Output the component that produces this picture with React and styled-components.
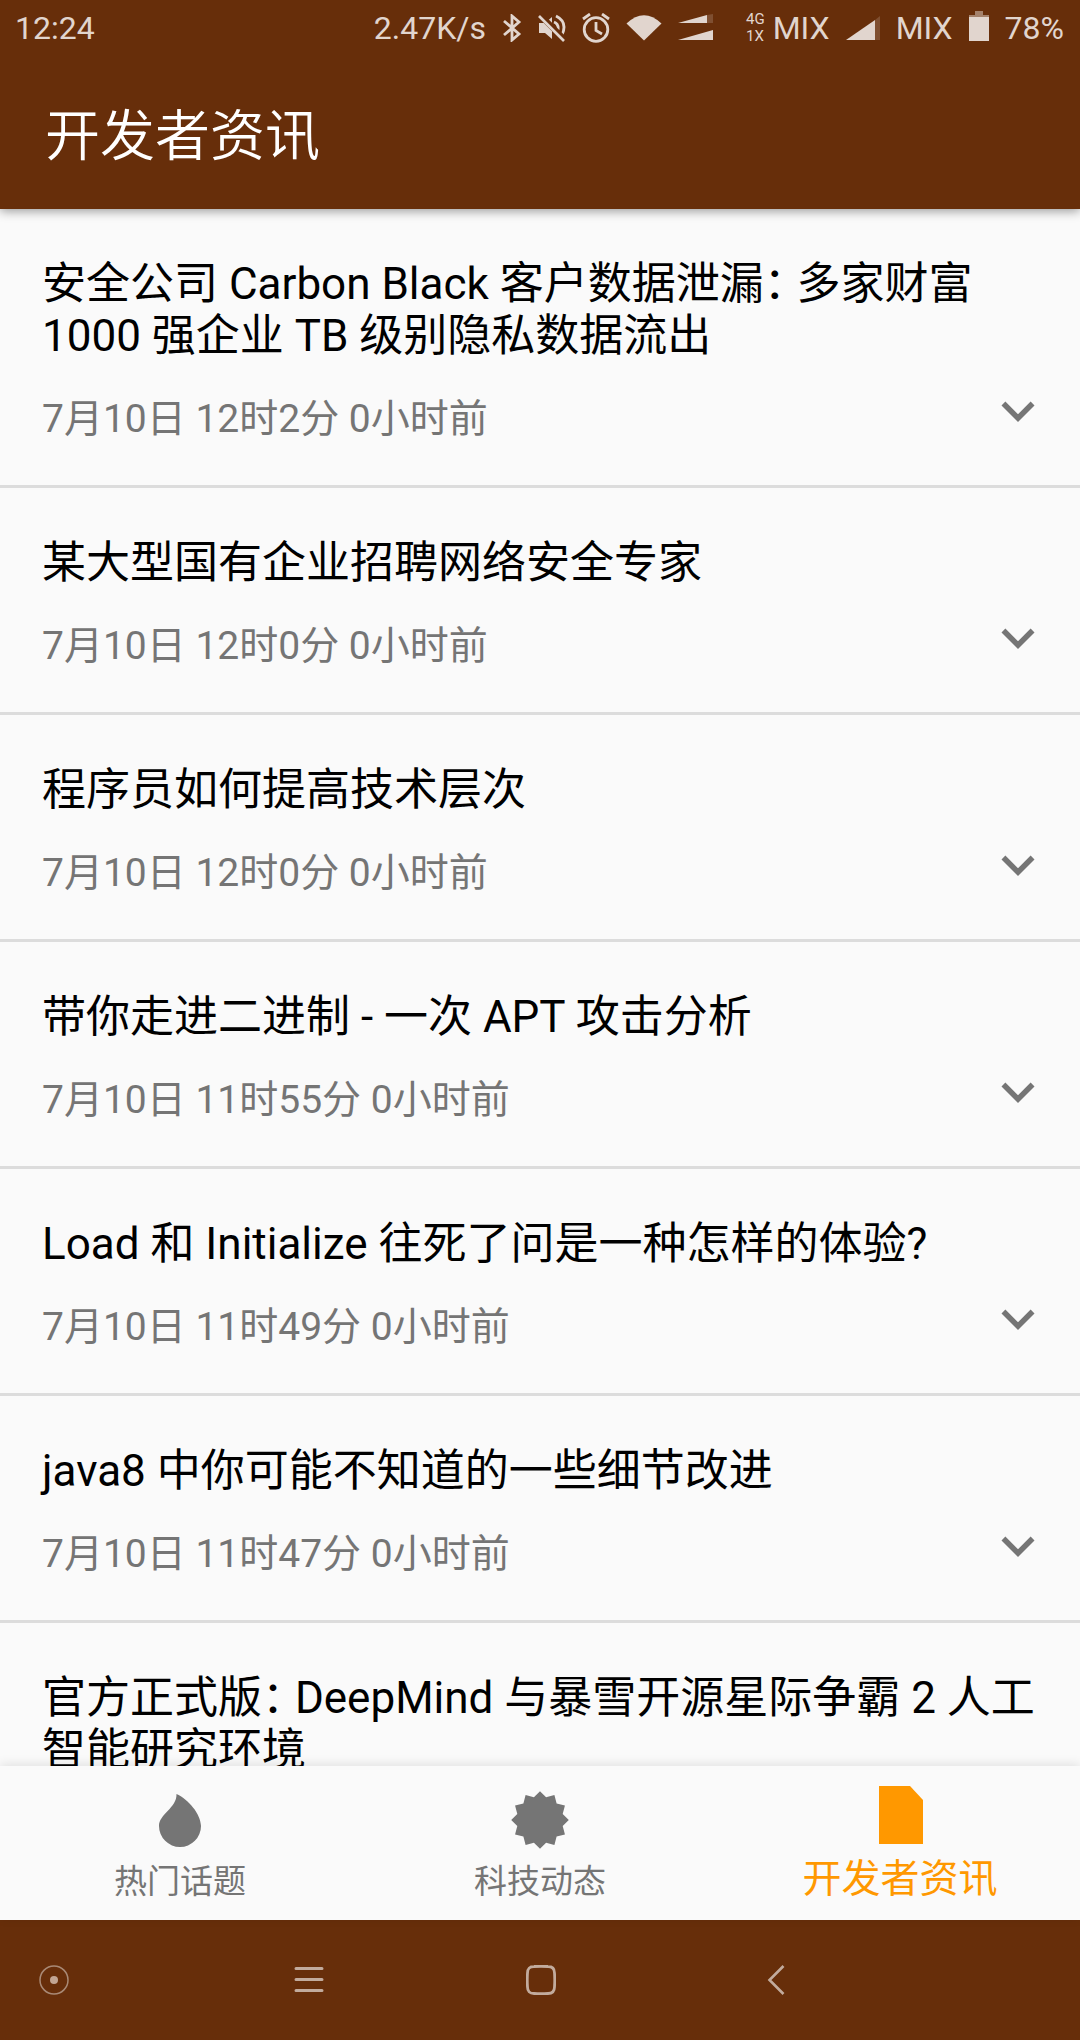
import React, { useState } from 'react';
import styled, { createGlobalStyle } from 'styled-components';

const brown = '#672e0a';
const accent = '#ff9800';
const muted = '#757575';
const statusInk = '#e1d5ce';

const GlobalStyle = createGlobalStyle`
  * { box-sizing: border-box; }
  body {
    margin: 0;
    background: #fafafa;
    font-family: Roboto, "Noto Sans CJK SC", sans-serif;
  }
`;

const Screen = styled.div`
  display: flex;
  flex-direction: column;
  height: 100vh;
  overflow: hidden;
`;

const Header = styled.header`
  flex: none;
  position: relative;
  background: ${brown};
  box-shadow: 0 2px 10px rgba(0, 0, 0, 0.4);
`;

const StatusBar = styled.div`
  display: flex;
  align-items: center;
  justify-content: space-between;
  height: 56px;
  padding: 0 16px 0 15px;
  color: ${statusInk};
  font-size: 32px;
  line-height: 38px;
`;

const StatusGroup = styled.div`
  display: flex;
  align-items: center;
  gap: ${(p) => p.$gap}px;
`;

const NetworkType = styled.span`
  display: flex;
  flex-direction: column;
  font-size: 15px;
  line-height: 17px;
`;

const PageTitle = styled.h1`
  margin: 0;
  padding: 48px 45px 41px;
  color: #fff;
  font-size: 55px;
  font-weight: 350;
  line-height: 64px;
`;

const Feed = styled.ul`
  flex: 1;
  min-height: 0;
  margin: 0;
  padding: 0;
  overflow: hidden;
  list-style: none;
`;

const Story = styled.li`
  padding: 49px 29px 41px 42px;
  border-bottom: 3px solid #dcdcdc;
`;

const StoryTitle = styled.h2`
  margin: 0 0 16px;
  color: #000;
  font-size: 44px;
  font-weight: 400;
  line-height: 52px;
`;

const Colon = styled.span`
  font-feature-settings: "halt";
`;

const StoryFooter = styled.div`
  display: flex;
  align-items: flex-end;
  justify-content: space-between;
`;

const StoryTime = styled.time`
  color: ${muted};
  font-size: 39px;
  line-height: 50px;
`;

const PlainButton = styled.button`
  display: flex;
  margin: 0;
  padding: 0;
  border: 0;
  background: none;
  color: inherit;
  font: inherit;
  cursor: pointer;
`;

const ExpandButton = styled(PlainButton)`
  color: ${muted};
`;

const TabBar = styled.nav`
  flex: none;
  position: relative;
  display: flex;
  height: 154px;
  background: #fafafa;
  box-shadow: 0 -2px 10px rgba(0, 0, 0, 0.1);
`;

const Tab = styled(PlainButton)`
  flex: 1;
  flex-direction: column;
  align-items: center;
  justify-content: flex-end;
  gap: ${(p) => (p.$active ? 10 : 12)}px;
  padding-bottom: 18px;
  color: ${(p) => (p.$active ? accent : muted)};
  font-size: ${(p) => (p.$active ? 39 : 33)}px;
  line-height: ${(p) => (p.$active ? 46 : 40)}px;
`;

const SystemBar = styled.nav`
  flex: none;
  display: grid;
  grid-template-columns: 54fr 255fr 232fr 235fr 304fr;
  align-items: center;
  height: 120px;
  background: ${brown};
  color: #c2ab9d;
`;

const SystemButton = styled(PlainButton)`
  justify-self: end;
  width: 30px;
  margin-right: -15px;
`;

const BluetoothIcon = () => (
  <svg width="20" height="28" viewBox="0 0 20 28" fill="none" stroke="currentColor" strokeWidth="2.8">
    <path d="M2 7L17 20L10 26V2L17 8L2 21" />
  </svg>
);

const MutedIcon = () => (
  <svg width="28" height="28" viewBox="0 0 28 28" fill="currentColor">
    <path d="M1 9H7L14 3V25L7 19H1Z" />
    <path d="M16 8Q21 10 20 16M18 2Q30 8 24 21" fill="none" stroke="currentColor" strokeWidth="2.8" />
    <path d="M1 0L28 27" stroke={brown} strokeWidth="6" />
    <path d="M1 2L26 27" stroke="currentColor" strokeWidth="2.6" />
  </svg>
);

const AlarmIcon = () => (
  <svg width="28" height="30" viewBox="0 0 28 30" fill="none" stroke="currentColor" strokeWidth="2.8">
    <circle cx="14" cy="16.500" r="11.800" />
    <path d="M14 9V17.500L20 21M1 6L8 1M27 6L20 1" />
  </svg>
);

const WifiIcon = () => (
  <svg width="36" height="28" viewBox="0 0 36 28" fill="currentColor">
    <path d="M0.500 9.500Q18 -7 35.500 9.500L18 26.500Z" />
  </svg>
);

const DualSignalIcon = () => (
  <svg width="36" height="28" viewBox="0 0 36 28" fill="currentColor">
    <path d="M0 9L29 1V9Z" />
    <path d="M29 1L35 0V9H29Z" opacity="0.2" />
    <path d="M0 26L35 16V26Z" />
  </svg>
);

const SignalIcon = () => (
  <svg width="34" height="26" viewBox="0 0 34 26" fill="currentColor">
    <path d="M0 25L29 5V25Z" />
    <path d="M29 5L34 1V25H29Z" opacity="0.2" />
  </svg>
);

const BatteryIcon = () => (
  <svg width="20" height="34" viewBox="0 0 20 34" fill="currentColor">
    <path d="M6 0H14V4H20V6H0V4H6Z" opacity="0.5" />
    <path d="M0 6H20V30H0Z" />
  </svg>
);

const ChevronIcon = () => (
  <svg width="66" height="66" viewBox="0 0 24 24" fill="currentColor">
    <path d="M16.590 8.590L12 13.170L7.410 8.590L6 10L12 16L18 10Z" />
  </svg>
);

const DropIcon = () => (
  <svg width="60" height="60" viewBox="0 0 60 60" fill="currentColor">
    <path d="M26.500 4C38 9 51 24 51 36A21 21 0 0 1 9 36C9 24 27 18 26.500 4Z" />
  </svg>
);

const burstPoints = Array.from({ length: 24 }, (_, i) => {
  const r = i % 2 ? 23.5 : 28.8;
  const a = (i * Math.PI) / 12;
  return `${(30 + r * Math.cos(a)).toFixed(2)},${(30 + r * Math.sin(a)).toFixed(2)}`;
}).join(' ');

const BurstIcon = () => (
  <svg width="60" height="60" viewBox="0 0 60 60" fill="currentColor">
    <polygon points={burstPoints} />
  </svg>
);

const DocumentIcon = () => (
  <svg width="60" height="60" viewBox="0 0 60 60" fill="currentColor">
    <path d="M9 0H40L53 14V58H9Z" />
  </svg>
);

const AssistIcon = () => (
  <svg width="30" height="30" viewBox="0 0 30 30">
    <circle cx="15" cy="15" r="14" fill="none" stroke="#a98a76" strokeWidth="1.500" />
    <circle cx="15" cy="15" r="4" fill="#c2a593" />
  </svg>
);

const MenuIcon = () => (
  <svg width="30" height="30" viewBox="0 0 30 30" stroke="currentColor" strokeWidth="3" strokeLinecap="round">
    <path d="M2 3.500H28M2 14.500H28M2 25.500H28" />
  </svg>
);

const HomeIcon = () => (
  <svg width="30" height="30" viewBox="0 0 30 30" fill="none" stroke="currentColor" strokeWidth="2.800">
    <path d="M8 1.500Q15 1 22 1.500Q28.500 1.500 28.500 8Q29 15 28.500 22Q28.500 28.500 22 28.500Q15 29 8 28.500Q1.500 28.500 1.500 22Q1 15 1.500 8Q1.500 1.500 8 1.500Z" />
  </svg>
);

const BackIcon = () => (
  <svg width="30" height="30" viewBox="0 0 30 30" fill="none" stroke="currentColor" strokeWidth="2.600">
    <path d="M22.500 1L8.500 15L22.500 29" />
  </svg>
);

const stories = [
  { title: '安全公司 Carbon Black 客户数据泄漏： 多家财富 1000 强企业 TB 级别隐私数据流出', time: '7月10日 12时2分 0小时前' },
  { title: '某大型国有企业招聘网络安全专家', time: '7月10日 12时0分 0小时前' },
  { title: '程序员如何提高技术层次', time: '7月10日 12时0分 0小时前' },
  { title: '带你走进二进制 - 一次 APT 攻击分析', time: '7月10日 11时55分 0小时前' },
  { title: 'Load 和 Initialize 往死了问是一种怎样的体验?', time: '7月10日 11时49分 0小时前' },
  { title: 'java8 中你可能不知道的一些细节改进', time: '7月10日 11时47分 0小时前' },
  { title: '官方正式版： DeepMind 与暴雪开源星际争霸 2 人工智能研究环境', time: '7月10日 11时40分 0小时前' },
];

const tabs = [
  { label: '热门话题', Icon: DropIcon },
  { label: '科技动态', Icon: BurstIcon },
  { label: '开发者资讯', Icon: DocumentIcon },
];

const systemButtons = [
  { label: '悬浮球', Icon: AssistIcon },
  { label: '菜单', Icon: MenuIcon },
  { label: '主页', Icon: HomeIcon },
  { label: '返回', Icon: BackIcon },
];

function TitleText({ text }) {
  const [head, tail] = text.split('：');
  if (tail === undefined) return text;
  return (
    <>
      {head}
      <Colon>：</Colon>
      {tail}
    </>
  );
}

export default function App() {
  const [active, setActive] = useState(2);
  return (
    <Screen>
      <GlobalStyle />
      <Header>
        <StatusBar>
          <span>12:24</span>
          <StatusGroup $gap={32}>
            <StatusGroup $gap={16}>
              <span>2.47K/s</span>
              <BluetoothIcon />
              <MutedIcon />
              <AlarmIcon />
              <WifiIcon />
              <DualSignalIcon />
            </StatusGroup>
            <StatusGroup $gap={16}>
              <StatusGroup $gap={8}>
                <NetworkType>
                  <span>4G</span>
                  <span>1X</span>
                </NetworkType>
                <span>MIX</span>
              </StatusGroup>
              <SignalIcon />
              <span>MIX</span>
              <BatteryIcon />
              <span>78%</span>
            </StatusGroup>
          </StatusGroup>
        </StatusBar>
        <PageTitle>开发者资讯</PageTitle>
      </Header>
      <Feed>
        {stories.map((story) => (
          <Story key={story.title}>
            <StoryTitle>
              <TitleText text={story.title} />
            </StoryTitle>
            <StoryFooter>
              <StoryTime>{story.time}</StoryTime>
              <ExpandButton type="button" aria-label="展开">
                <ChevronIcon />
              </ExpandButton>
            </StoryFooter>
          </Story>
        ))}
      </Feed>
      <TabBar>
        {tabs.map(({ label, Icon }, i) => (
          <Tab key={label} type="button" $active={i === active} onClick={() => setActive(i)}>
            <Icon />
            <span>{label}</span>
          </Tab>
        ))}
      </TabBar>
      <SystemBar>
        {systemButtons.map(({ label, Icon }) => (
          <SystemButton key={label} type="button" aria-label={label}>
            <Icon />
          </SystemButton>
        ))}
      </SystemBar>
    </Screen>
  );
}
